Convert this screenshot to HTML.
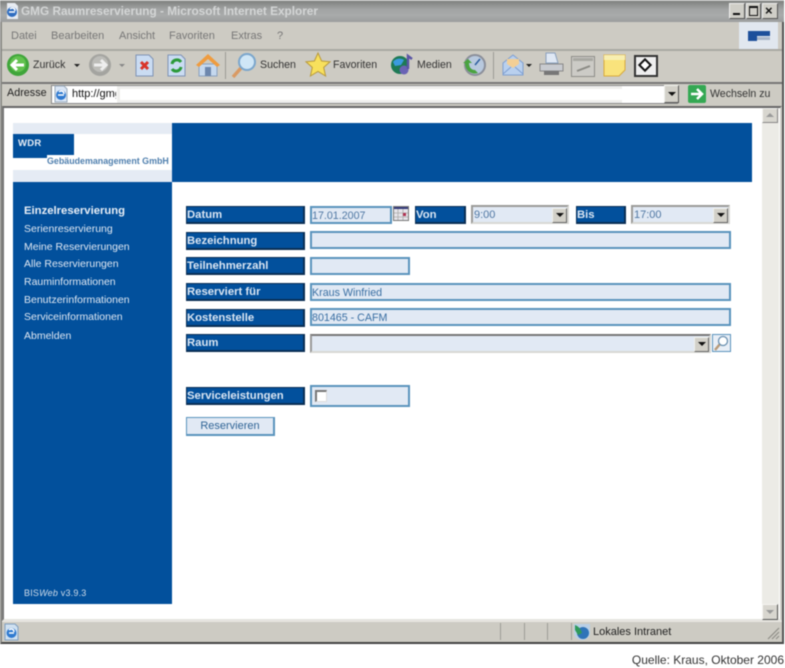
<!DOCTYPE html>
<html lang="de"><head><meta charset="utf-8"><title>GMG Raumreservierung</title>
<style>
html,body{margin:0;padding:0;background:#fff}
body{width:785px;height:668px;position:relative;overflow:hidden;font-family:"Liberation Sans",sans-serif}
#w{position:absolute;left:0;top:0;width:785px;height:668px;filter:blur(.5px)}
.a{position:absolute;white-space:nowrap}
.b{position:absolute;box-sizing:border-box}
.t{font-size:10.6px;color:#333;line-height:14px}
.m{font-size:11px;color:#777;line-height:14px}
.n{font-size:10.5px;color:#dfe7f2;line-height:14px;left:24px}
.l{position:absolute;box-sizing:border-box;left:186px;width:119px;height:18px;background:#02509c;border:1px solid #0a2f55;border-right-width:2px;border-bottom-width:2px;color:#dbe6f3;font-weight:bold;font-size:11.3px;line-height:17px;padding-left:0;letter-spacing:0}
.i{position:absolute;box-sizing:border-box;background:#e1e9f4;border:2px solid #5a93bd;color:#3a6fa3;font-size:10.7px;line-height:16px;padding-left:0;height:18px}
.s{position:absolute;box-sizing:border-box;background:#e1e9f4;border:2px solid #9b9b98;border-right-color:#d8d8d4;border-bottom-color:#d8d8d4;color:#4f77a3;font-size:11px;line-height:15px;padding-left:1px;height:19px}
.d{position:absolute;box-sizing:border-box;right:0;top:0;width:15px;height:15px;background:#d2d0c8;border:1px solid;border-color:#f0f0ec #666 #666 #f0f0ec}
.d:after{content:"";position:absolute;left:3px;top:4px;border:4px solid transparent;border-top:4px solid #111;border-bottom:0}
</style></head><body><div id="w">

<!-- window frame -->
<div class="b" style="left:0;top:0;width:784px;height:644px;background:#cdcbc3;border-right:2px solid #555;border-bottom:2px solid #444;border-left:2px solid #8a8a86"></div>

<!-- title bar -->
<div class="b" style="left:0;top:0;width:784px;height:22px;background:linear-gradient(#7f817f,#a2a4a4 40%,#a9abab 70%,#9a9c9c);border-top:1px solid #bbb"></div>
<svg class="a" style="left:4px;top:2px" width="16" height="18" viewBox="0 0 16 18"><path d="M3 1h8l3 3v13H3z" fill="#e8ecf2"/><circle cx="8" cy="10" r="5" fill="#2f6dc0"/><path d="M5 10h6M6 7c2-2 5-1 5 2" stroke="#fff" stroke-width="1.5" fill="none"/></svg>
<div class="a" style="left:21px;top:3px;font:bold 11.8px/16px 'Liberation Sans',sans-serif;color:#d4d6d6">GMG Raumreservierung - Microsoft Internet Explorer</div>
<div class="b" style="left:729px;top:3px;width:16px;height:16px;background:#cfcec7;border:1px solid;border-color:#eee #555 #555 #eee"></div>
<div class="b" style="left:733px;top:13px;width:7px;height:2px;background:#111"></div>
<div class="b" style="left:746px;top:3px;width:15px;height:16px;background:#cfcec7;border:1px solid;border-color:#eee #555 #555 #eee"></div>
<div class="b" style="left:749px;top:6px;width:9px;height:10px;border:1px solid #111;border-top-width:2px"></div>
<div class="b" style="left:762px;top:3px;width:16px;height:16px;background:#cfcec7;border:1px solid;border-color:#eee #555 #555 #eee"></div>
<div class="a" style="left:765px;top:3px;font:bold 13px/16px 'Liberation Sans',sans-serif;color:#111">×</div>

<!-- menu bar -->
<div class="a m" style="left:11px;top:29px">Datei</div>
<div class="a m" style="left:51px;top:29px">Bearbeiten</div>
<div class="a m" style="left:119px;top:29px">Ansicht</div>
<div class="a m" style="left:169px;top:29px">Favoriten</div>
<div class="a m" style="left:231px;top:29px">Extras</div>
<div class="a m" style="left:277px;top:29px">?</div>
<div class="b" style="left:739px;top:22px;width:39px;height:27px;background:#e1e7ef"></div>
<div class="b" style="left:748px;top:31px;width:22px;height:5px;background:#1d4f9b"></div>
<div class="b" style="left:748px;top:36px;width:9px;height:5px;background:#1d4f9b"></div>
<div class="b" style="left:757px;top:37px;width:13px;height:3px;background:#a9b6c9"></div>
<div class="b" style="left:2px;top:49px;width:780px;height:2px;background:#a9a8a2"></div>

<!-- toolbar -->
<svg class="a" style="left:6px;top:53px" width="24" height="24" viewBox="0 0 24 24"><circle cx="12" cy="12" r="11" fill="#3fa53a"/><circle cx="12" cy="11" r="8" fill="#62c24f"/><path d="M18 12H7M11 7l-5 5 5 5" stroke="#fff" stroke-width="3" fill="none"/></svg>
<div class="a t" style="left:33px;top:58px">Zurück</div>
<div class="a" style="left:74px;top:64px;border:3px solid transparent;border-top:3px solid #222;border-bottom:0"></div>
<svg class="a" style="left:88px;top:53px" width="24" height="24" viewBox="0 0 24 24"><circle cx="12" cy="12" r="11" fill="#a4a4a0"/><circle cx="12" cy="11" r="8" fill="#bcbcb8"/><path d="M6 12h11M13 7l5 5-5 5" stroke="#eee" stroke-width="3" fill="none"/></svg>
<div class="a" style="left:119px;top:64px;border:3px solid transparent;border-top:3px solid #888;border-bottom:0"></div>
<svg class="a" style="left:135px;top:53px" width="20" height="24" viewBox="0 0 20 24"><path d="M1 2h13l4 4v17H1z" fill="#cadcf2" stroke="#7f93b5"/><path d="M6 9l7 7M13 9l-7 7" stroke="#d8342a" stroke-width="3"/></svg>
<svg class="a" style="left:167px;top:53px" width="20" height="24" viewBox="0 0 20 24"><path d="M1 2h13l4 4v17H1z" fill="#cadcf2" stroke="#7f93b5"/><path d="M5 11a5 5 0 0 1 9-2M14 14a5 5 0 0 1-9 2" stroke="#2c9a3a" stroke-width="3" fill="none"/></svg>
<svg class="a" style="left:196px;top:52px" width="24" height="26" viewBox="0 0 24 26"><path d="M3 12v12h18V12z" fill="#c5d8ee" stroke="#8aa0bd"/><path d="M0 13L12 2l12 11-3 2-9-8-9 8z" fill="#ef9c3f"/><rect x="9" y="15" width="6" height="9" fill="#6d87ad"/></svg>
<div class="b" style="left:225px;top:52px;width:1px;height:27px;background:#9c9b95"></div>
<svg class="a" style="left:231px;top:52px" width="26" height="27" viewBox="0 0 26 27"><path d="M10 16L2 25" stroke="#d99a63" stroke-width="3.5"/><circle cx="16" cy="10" r="8" fill="#cfe6f6" stroke="#7ba6cc" stroke-width="2"/></svg>
<div class="a t" style="left:260px;top:58px">Suchen</div>
<svg class="a" style="left:305px;top:52px" width="26" height="26" viewBox="0 0 26 26"><path d="M13 1l3.6 8 8.4.8-6.3 5.6 1.900 8.600-7.600-4.500L5.400 24l1.900-8.600L1 9.800 9.400 9z" fill="#f8e05c" stroke="#b99a3a"/></svg>
<div class="a t" style="left:333px;top:58px">Favoriten</div>
<svg class="a" style="left:390px;top:53px" width="24" height="24" viewBox="0 0 24 24"><circle cx="10" cy="12" r="9" fill="#1e7a55"/><path d="M3 9c3-4 8-4 11-2l-3 5-6 1z" fill="#3b9be0"/><circle cx="14" cy="17" r="4.500" fill="#6a63b5"/><path d="M18 16V3l4 3" stroke="#5a55a5" stroke-width="2.500" fill="none"/></svg>
<div class="a t" style="left:417px;top:58px">Medien</div>
<svg class="a" style="left:462px;top:53px" width="25" height="24" viewBox="0 0 25 24"><circle cx="13" cy="12" r="10" fill="#b8c9de" stroke="#8b8f9a" stroke-width="2"/><path d="M13 12l5-6" stroke="#2a5d9f" stroke-width="1.500"/><path d="M3 10c0 8 7 12 13 10l-3-3c-4 0-6-3-6-7l3 0-4-4-5 4z" fill="#4aa33f"/></svg>
<div class="b" style="left:493px;top:52px;width:1px;height:27px;background:#9c9b95"></div>
<svg class="a" style="left:501px;top:53px" width="24" height="24" viewBox="0 0 24 24"><path d="M2 10L12 2l10 8v12H2z" fill="#b9d0ee" stroke="#7f9fd0"/><path d="M6 11V6h12v5l-6 4z" fill="#f3cf95"/><path d="M2 21l8-7M22 21l-8-7" stroke="#7f9fd0"/></svg>
<div class="a" style="left:526px;top:64px;border:3px solid transparent;border-top:3px solid #222;border-bottom:0"></div>
<svg class="a" style="left:539px;top:52px" width="25" height="26" viewBox="0 0 25 26"><path d="M7 1h9l3 10H7z" fill="#dfe8f4" stroke="#8aa0bd"/><path d="M1 12h23v7H1z" fill="#c8cbd0" stroke="#888"/><path d="M5 19h15v4H5z" fill="#777"/></svg>
<svg class="a" style="left:571px;top:56px" width="24" height="21" viewBox="0 0 24 21"><rect x=".5" y=".5" width="23" height="20" fill="#cccbc6" stroke="#8d8d88"/><rect x="2" y="2" width="20" height="3" fill="#a8a8a2"/><path d="M6 15l13-5" stroke="#8a8a84" stroke-width="2"/></svg>
<svg class="a" style="left:603px;top:54px" width="23" height="23" viewBox="0 0 23 23"><path d="M1 1h21v15l-6 6H1z" fill="#f9e37c" stroke="#d9aa3c"/><path d="M1 1h21v5H1z" fill="#f7eeb0"/></svg>
<div class="b" style="left:634px;top:55px;width:24px;height:22px;background:#eee;border:2px solid #333"></div>
<div class="a" style="left:640px;top:60px;width:10px;height:10px;background:#fff;border:2px solid #111;box-sizing:border-box;transform:rotate(45deg)"></div>
<div class="b" style="left:2px;top:82px;width:780px;height:2px;background:#777"></div>

<!-- address bar -->
<div class="a t" style="left:7px;top:86px;font-size:10.8px;color:#222">Adresse</div>
<div class="b" style="left:51px;top:85px;width:627px;height:19px;background:#eeeeec;border:1px solid #888"></div>
<div class="b" style="left:52px;top:86px;width:65px;height:17px;background:#fff"></div>
<svg class="a" style="left:53px;top:85px" width="16" height="18" viewBox="0 0 16 18"><path d="M2 1h9l3 3v13H2z" fill="#dbe6f5" stroke="#9ab"/><circle cx="8" cy="10" r="5" fill="#2f7ad0"/><path d="M5 10h6M6 7c2-2 5-1 5 2" stroke="#fff" stroke-width="1.500" fill="none"/></svg>
<div class="a t" style="left:72px;top:87px;color:#111;width:44px;overflow:hidden;font-size:11px">http://gmg</div>
<div class="b" style="left:120px;top:89px;width:502px;height:11px;background:#fff"></div>
<div class="b" style="left:622px;top:86px;width:43px;height:17px;background:#fff"></div>
<div class="b" style="left:664px;top:85px;width:15px;height:18px;background:#d2d0c8;border:1px solid;border-color:#f0f0ec #555 #555 #f0f0ec"></div>
<div class="a" style="left:668px;top:92px;border:4px solid transparent;border-top:4px solid #111;border-bottom:0"></div>
<svg class="a" style="left:688px;top:85px" width="18" height="18" viewBox="0 0 18 18"><rect width="18" height="18" rx="2" fill="#34a853"/><path d="M3 9h10M9 4l5 5-5 5" stroke="#fff" stroke-width="2.500" fill="none"/></svg>
<div class="a t" style="left:710px;top:87px">Wechseln zu</div>

<!-- page area -->
<div class="b" style="left:2px;top:106px;width:780px;height:515px;background:#fff;border:2px solid;border-color:#666 #cfcec8 #e5e4df #777"></div>

<!-- scrollbar -->
<div class="b" style="left:762px;top:108px;width:17px;height:511px;background:#ecebe6"></div>
<div class="b" style="left:762px;top:108px;width:16px;height:15px;background:#d8d6cf;border:1px solid;border-color:#f5f5f2 #888 #888 #f5f5f2"></div>
<div class="a" style="left:766px;top:113px;border:4px solid transparent;border-bottom:4px solid #999;border-top:0"></div>
<div class="b" style="left:762px;top:604px;width:16px;height:16px;background:#d8d6cf;border:1px solid;border-color:#f5f5f2 #555 #555 #f5f5f2"></div>
<div class="a" style="left:766px;top:610px;border:4px solid transparent;border-top:4px solid #999;border-bottom:0"></div>

<!-- site header -->
<div class="b" style="left:13px;top:123px;width:159px;height:59px;background:#e5ebf4"></div>
<div class="b" style="left:13px;top:134px;width:159px;height:36px;background:#fff"></div>
<div class="b" style="left:13px;top:134px;width:61px;height:24px;background:#02509c"></div>
<div class="a" style="left:18px;top:138px;font:bold 9.500px/12px 'Liberation Sans',sans-serif;color:#e8eef6;letter-spacing:.3px">WDR</div>
<div class="b" style="left:47px;top:158px;width:125px;height:1px;background:#fff"></div>
<div class="a" style="left:47px;top:155px;font:bold 8.900px/12px 'Liberation Sans',sans-serif;color:#4f7fae;background:#fff">Gebäudemanagement GmbH</div>
<div class="b" style="left:172px;top:123px;width:580px;height:59px;background:#02509c"></div>

<!-- sidebar -->
<div class="b" style="left:13px;top:182px;width:159px;height:422px;background:#02509c"></div>
<div class="a n" style="top:204px;font-weight:bold;font-size:11.300px;color:#e8eef6">Einzelreservierung</div>
<div class="a n" style="top:222px">Serienreservierung</div>
<div class="a n" style="top:240px">Meine Reservierungen</div>
<div class="a n" style="top:257px">Alle Reservierungen</div>
<div class="a n" style="top:275px">Rauminformationen</div>
<div class="a n" style="top:293px">Benutzerinformationen</div>
<div class="a n" style="top:310px">Serviceinformationen</div>
<div class="a n" style="top:329px">Abmelden</div>
<div class="a" style="left:24px;top:587px;font-size:9px;line-height:12px;color:#d0dcea;letter-spacing:.2px">BIS<i>Web</i> v3.9.3</div>

<!-- form -->
<div class="l" style="top:206px">Datum</div>
<div class="l" style="top:232px">Bezeichnung</div>
<div class="l" style="top:257px">Teilnehmerzahl</div>
<div class="l" style="top:283px">Reserviert für</div>
<div class="l" style="top:309px">Kostenstelle</div>
<div class="l" style="top:334px">Raum</div>
<div class="l" style="top:387px">Serviceleistungen</div>

<div class="i" style="left:310px;top:206px;width:82px;color:#4f77a3">17.01.2007</div>
<svg class="a" style="left:393px;top:206px" width="17" height="16" viewBox="0 0 17 16"><rect x=".5" y=".5" width="15" height="14" fill="#e6e4ea" stroke="#777"/><rect x="1" y="1" width="14" height="2" fill="#333a7a"/><path d="M5 3v11M10 3v11M1 7h14M1 11h14" stroke="#aaa" stroke-width=".8"/><rect x="10" y="7" width="3" height="3" fill="#b03050"/></svg>
<div class="l" style="left:415px;top:206px;width:51px">Von</div>
<div class="s" style="left:471px;top:205px;width:98px;line-height:16px">9:00<span class="d" style="top:1px"></span></div>
<div class="l" style="left:576px;top:206px;width:50px">Bis</div>
<div class="s" style="left:631px;top:205px;width:99px;line-height:16px">17:00<span class="d" style="top:1px"></span></div>

<div class="i" style="left:310px;top:231px;width:421px"></div>
<div class="i" style="left:310px;top:257px;width:100px"></div>
<div class="i" style="left:310px;top:283px;width:421px">Kraus Winfried</div>
<div class="i" style="left:310px;top:308px;width:421px">801465 - CAFM</div>
<div class="s" style="left:310px;top:334px;width:401px;height:19px;border-top-color:#777;border-left-color:#999;padding:0"><span class="d" style="top:1px"></span></div>
<div class="b" style="left:712px;top:334px;width:19px;height:18px;background:#e8eef6;border:1px solid #5a93bd"></div>
<svg class="a" style="left:713px;top:335px" width="17" height="16" viewBox="0 0 17 16"><path d="M7 9l-5 6" stroke="#b89a78" stroke-width="2.500"/><circle cx="10" cy="6" r="4.500" fill="#fff" stroke="#6a90b0" stroke-width="1.300"/></svg>

<div class="i" style="left:310px;top:385px;width:100px;height:22px"></div>
<div class="b" style="left:315px;top:390px;width:12px;height:12px;background:#fff;border:1px solid;border-width:2px 1px 1px 2px;border-color:#777 #ddd #ddd #777"></div>

<div class="b" style="left:186px;top:417px;width:89px;height:19px;background:#e1e9f4;border:1px solid #5a93bd;border-right-width:2px;border-bottom-width:2px;color:#2f6496;font-size:11px;line-height:17px;text-align:center">Reservieren</div>

<!-- status bar -->
<div class="b" style="left:2px;top:621px;width:780px;height:21px;background:#cdcbc3;border-top:1px solid #e8e7e2"></div>
<div class="b" style="left:500px;top:623px;width:1px;height:17px;background:#9d9c96"></div>
<div class="b" style="left:524px;top:623px;width:1px;height:17px;background:#9d9c96"></div>
<div class="b" style="left:547px;top:623px;width:1px;height:17px;background:#9d9c96"></div>
<div class="b" style="left:571px;top:623px;width:1px;height:17px;background:#9d9c96"></div>
<svg class="a" style="left:3px;top:623px" width="17" height="18" viewBox="0 0 17 18"><path d="M2 1h10l3 3v13H2z" fill="#cfe0f0" stroke="#7f9fc0"/><circle cx="8.500" cy="10" r="5" fill="#2f7ad0"/><path d="M6 10h5M6 7c2-2 5-1 5 2" stroke="#fff" stroke-width="1.500" fill="none"/></svg>
<svg class="a" style="left:573px;top:623px" width="18" height="18" viewBox="0 0 18 18"><path d="M1 1h16v9c0 4-4 7-8 7s-8-3-8-7z" fill="#b9cfe6"/><circle cx="10" cy="10" r="6" fill="#2f74b8"/><path d="M2 2c3 1 6 4 7 8l-4 2-3-5z" fill="#2f9a5a"/></svg>
<div class="a t" style="left:593px;top:625px;color:#222;font-size:11px">Lokales Intranet</div>
<svg class="a" style="left:766px;top:627px" width="14" height="13" viewBox="0 0 14 13"><path d="M13 1L2 12M13 5L6 12M13 9l-3 3" stroke="#8f8e88" stroke-width="1.200"/></svg>

<!-- caption -->
<div class="a" style="right:1px;top:653px;font-size:12px;line-height:14px;color:#333">Quelle: Kraus, Oktober 2006</div>
</div></body></html>
